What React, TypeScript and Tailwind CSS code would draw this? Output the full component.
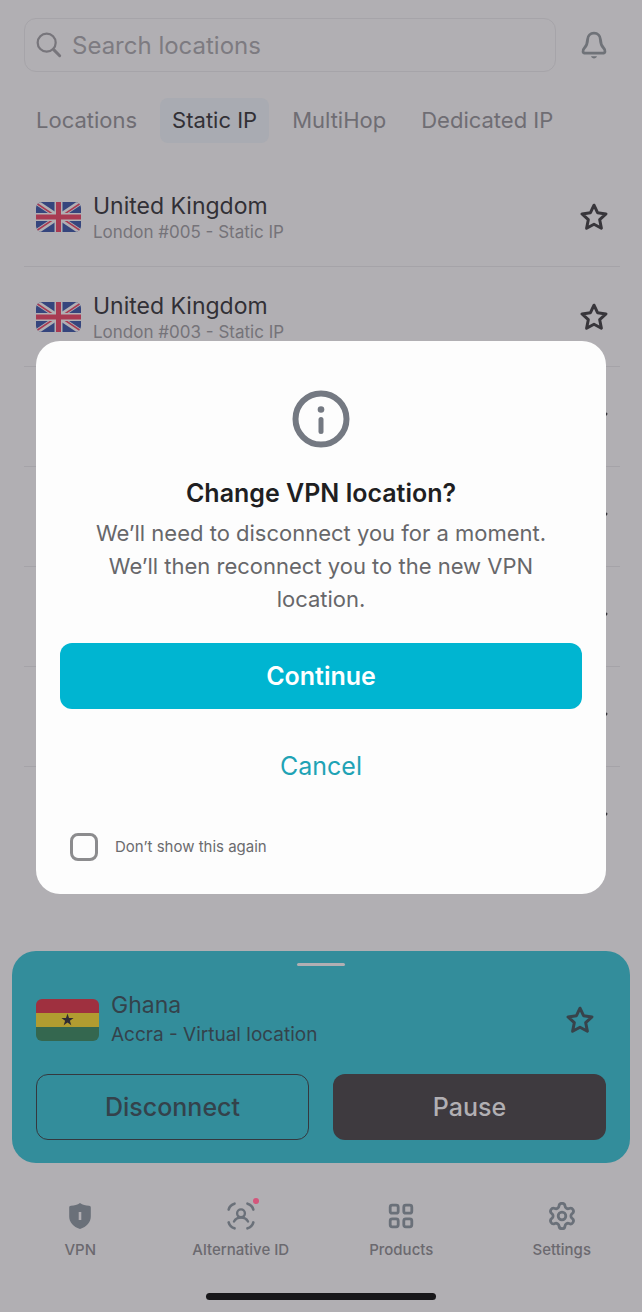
import React, {useState} from 'react';
import {Settings} from 'lucide-react';

interface Location {
    id: number;
    name?: string;
    detail?: string;
}

interface NavItem {
    label: string;
    icon: React.ReactNode;
    badge?: boolean;
}

const tabs = ['Locations', 'Static IP', 'MultiHop', 'Dedicated IP'];

// rows without a name are not loaded yet, only the favourite button is there
const locations: Location[] = [
    {id: 1, name: 'United Kingdom', detail: 'London #005 - Static IP'},
    {id: 2, name: 'United Kingdom', detail: 'London #003 - Static IP'},
    {id: 3},
    {id: 4},
    {id: 5},
    {id: 6},
    {id: 7},
];

const StarIcon = () => (
    <svg viewBox="0 0 28 28" className="w-7 h-7" fill="none" stroke="currentColor" strokeWidth="3" strokeLinejoin="round">
        <path d="M14 2.2 17.53 9.700 25.98 10.900 19.700 16.700 21.400 25.200 14 21.200 6.600 25.200 8.300 16.700 2.020 10.900 10.470 9.700Z"/>
    </svg>
);

const SearchIcon = () => (
    <svg viewBox="0 0 28 28" className="w-[26px] h-[26px] shrink-0" fill="none" stroke="currentColor" strokeLinecap="round">
        <circle cx="11.5" cy="11.5" r="9.7" strokeWidth="2.4"/>
        <path d="M19 19 25.500 25.500" strokeWidth="3.2"/>
    </svg>
);

const BellIcon = () => (
    <svg viewBox="0 0 28 30" className="w-7 h-[30px]" fill="none" stroke="currentColor" strokeWidth="2.8" strokeLinejoin="round">
        <path d="M14 3.200c-3.700 0-6.200 2.500-6.400 6.200-.2 4.600-.6 5.900-3 8.400-1.600 1.700-1.900 2.600-1.600 3.800.3 1.100 1.100 1.600 2.500 1.600h17c1.400 0 2.200-.5 2.500-1.600.3-1.200 0-2.100-1.600-3.800-2.400-2.500-2.800-3.800-3-8.400C20.200 5.700 17.700 3.200 14 3.200Z"/>
        <path d="M11 26.200h6c-.5 1.400-1.600 2.200-3 2.200s-2.500-.8-3-2.200Z" fill="currentColor" stroke="none"/>
    </svg>
);

const InfoIcon = () => (
    <svg viewBox="0 0 58 58" className="w-[58px] h-[58px]" fill="none" stroke="currentColor">
        <circle cx="29" cy="29" r="25.5" strokeWidth="6"/>
        <circle cx="29" cy="19.5" r="3.3" fill="currentColor" stroke="none"/>
        <path d="M29 29.5v12" strokeWidth="5" strokeLinecap="round"/>
    </svg>
);

const ShieldIcon = () => (
    <svg viewBox="0 0 28 28" className="w-7 h-7">
        <path d="M14 1c2.5 1.8 5.7 2.6 9 2.7 1.2 0 1.8.7 1.8 1.8v9c0 5.6-4 10.4-10.8 12.5C7.2 24.9 3.2 20.1 3.2 14.5v-9c0-1.1.6-1.8 1.8-1.8C8.3 3.6 11.5 2.8 14 1Z" fill="#6a7079"/>
        <path d="M14 10v8" stroke="#b1afb3" strokeWidth="2.6"/>
    </svg>
);

const IdentityIcon = () => (
    <svg viewBox="0 0 28 28" className="w-7 h-7" fill="none" stroke="currentColor" strokeWidth="2.7" strokeLinecap="round">
        <path d="M1.7 7.5c.8-3 2.8-5 5.800-5.800M20.500 1.700c3 .8 5 2.800 5.800 5.800M26.300 20.500c-.8 3-2.800 5-5.800 5.800M7.500 26.300c-3-.8-5-2.800-5.800-5.800"/>
        <circle cx="14" cy="11.3" r="3.9" strokeWidth="2.4"/>
        <path d="M7 19.500c1.300-2.400 3.900-4 7-4s5.700 1.600 7 4" strokeWidth="2.4"/>
    </svg>
);

const ProductsIcon = () => (
    <svg viewBox="0 0 28 28" className="w-7 h-7" fill="none" stroke="currentColor" strokeWidth="2.8">
        <rect x="3.2" y="3.2" width="8" height="8" rx="2"/>
        <rect x="16.8" y="3.2" width="8" height="8" rx="2"/>
        <rect x="3.2" y="16.8" width="8" height="8" rx="2"/>
        <rect x="16.8" y="16.8" width="8" height="8" rx="2"/>
    </svg>
);

const UkFlag = () => (
    <svg viewBox="0 0 45 30" className="w-[45px] h-[30px] rounded-md shrink-0">
        <path d="M0 0h45v30H0Z" fill="#35457d"/>
        <path d="M0 0 45 30M45 0 0 30" stroke="#b1afb3" strokeWidth="5"/>
        <path d="M0 1 20 14.4M25 15.6 45 29M45 1 25 14.4M20 15.6 0 29" stroke="#a83a52" strokeWidth="1.7"/>
        <path d="M22.5 0v30M0 15h45" stroke="#b1afb3" strokeWidth="8"/>
        <path d="M22.5 0v30M0 15h45" stroke="#a83a52" strokeWidth="5"/>
    </svg>
);

const GhanaFlag = () => (
    <svg viewBox="0 0 63 42" className="w-[63px] h-[42px] rounded-md shrink-0">
        <path d="M0 0h63v14H0Z" fill="#9f303f"/>
        <path d="M0 14h63v14H0Z" fill="#b19c30"/>
        <path d="M0 28h63v14H0Z" fill="#34674f"/>
        <path d="m31.5 14.5 1.5 4.4h4.6l-3.7 2.8 1.4 4.5-3.8-2.7-3.8 2.7 1.4-4.5-3.7-2.8H30Z" fill="#2f2b33"/>
    </svg>
);

const navItems: NavItem[] = [
    {label: 'VPN', icon: <ShieldIcon/>},
    {label: 'Alternative ID', icon: <IdentityIcon/>, badge: true},
    {label: 'Products', icon: <ProductsIcon/>},
    {label: 'Settings', icon: <Settings viewBox="1 1 22 22" className="w-7 h-7" strokeWidth={2.2}/>},
];

const LocationRow: React.FC<{ location: Location }> = ({ location }) => (
    <li className="flex items-center h-[100px] px-3 border-b border-[#a5a3a8] last:border-b-0">
        {location.name && (
            <>
                <UkFlag/>
                <div className="ml-3 pt-0.5">
                    <h3 className="text-[23px] leading-7 text-[#323036]">{location.name}</h3>
                    <p className="text-[17px] leading-6 text-[#757379]">{location.detail}</p>
                </div>
            </>
        )}
        <button type="button" aria-label="Favourite" className="ml-auto text-[#38363b]">
            <StarIcon/>
        </button>
    </li>
);

const ConnectionPanel = () => (
    <section className="mx-3 px-6 pt-3 pb-[23px] rounded-[24px] bg-[#338d9b]">
        <div className="w-12 h-[3px] mx-auto rounded-full bg-[#b1afb3]"/>
        <div className="flex items-center mt-6">
            <GhanaFlag/>
            <div className="ml-3 text-[#34424b]">
                <h3 className="text-[23px] leading-[30px]">Ghana</h3>
                <p className="text-[19px] leading-[30px]">Accra - Virtual location</p>
            </div>
            <button type="button" aria-label="Favourite" className="ml-auto mr-3 text-[#38434a]">
                <StarIcon/>
            </button>
        </div>
        <div className="grid grid-cols-2 gap-6 mt-6">
            <button type="button" className="h-[66px] pt-0.5 rounded-xl border border-[#35383e] text-[25px] font-medium text-[#34424b]">
                Disconnect
            </button>
            <button type="button" className="h-[66px] pt-0.5 rounded-xl bg-[#3e3a3f] text-[25px] font-medium text-[#b1afb3]">
                Pause
            </button>
        </div>
    </section>
);

const ChangeLocationDialog = () => {
    const [hidden, setHidden] = useState<boolean>(false);

    return (
        <div className="absolute inset-0 flex items-center px-9 pb-[77px]">
            <div role="dialog" aria-labelledby="dialog-title" className="flex flex-col w-full px-6 pt-[49px] pb-[33px] rounded-[24px] bg-[#fdfdfd]">
                <div className="flex justify-center text-[#747982]">
                    <InfoIcon/>
                </div>
                <h2 id="dialog-title" className="mt-[29px] text-[25px] leading-8 font-semibold text-center text-[#1f1f22]">
                    Change VPN location?
                </h2>
                <p className="mt-2 px-6 text-[22px] leading-[33px] text-center text-[#67676a]">
                    We’ll need to disconnect you for a moment. We’ll then reconnect you to the new VPN location.
                </p>
                <button type="button" className="h-[66px] mt-[27px] pt-0.5 rounded-xl bg-[#00b5d1] text-[25px] font-semibold text-white">
                    Continue
                </button>
                <button type="button" className="h-[66px] mt-6 pt-0.5 text-[25px] text-[#1fa3b5]">
                    Cancel
                </button>
                <label className="flex items-center self-start mt-[34px] ml-[10px] text-[15px] text-[#6b6b6e]">
                    <input
                        type="checkbox"
                        checked={hidden}
                        onChange={(e) => setHidden(e.target.checked)}
                        className="appearance-none w-7 h-7 mr-[17px] rounded-lg border-3 border-[#8c8c8e] checked:bg-[#00b5d1]"
                    />
                    Don’t show this again
                </label>
            </div>
        </div>
    );
};

const App: React.FC = () => {
    const [tab, setTab] = useState<string>('Static IP');

    return (
        <div className="relative flex flex-col min-h-screen bg-[#b1afb3] font-['Inter',sans-serif]">
            <header className="flex items-center pt-[18px] pl-6 pr-[34px]">
                <label className="flex items-center flex-1 h-[54px] px-[11px] rounded-xl border border-[#a6a4a9] text-[#77757b]">
                    <SearchIcon/>
                    <input
                        type="text"
                        aria-label="Search locations"
                        placeholder="Search locations"
                        className="flex-1 min-w-0 ml-[10px] pt-0.5 text-[24px] outline-none placeholder:text-[#7d7b81]"
                    />
                </label>
                <button type="button" aria-label="Notifications" className="ml-6 text-[#6f7278]">
                    <BellIcon/>
                </button>
            </header>
            <nav className="flex mt-[26px] pl-6">
                {tabs.map((name) => (
                    <button
                        key={name}
                        type="button"
                        onClick={() => setTab(name)}
                        className={`h-[45px] mr-[11px] px-3 rounded-lg text-[22px] ${name === tab ? 'bg-[#a9abb2] text-[#323036]' : 'text-[#6f6d73]'}`}
                    >
                        {name}
                    </button>
                ))}
            </nav>
            <ul className="flex-1 mt-6 pl-6 pr-[22px]">
                {locations.map((location) => (
                    <LocationRow key={location.id} location={location}/>
                ))}
            </ul>
            <ConnectionPanel/>
            <footer className="pt-[39px] pb-3">
                <nav className="grid grid-cols-4">
                    {navItems.map(({label, icon, badge}) => (
                        <button key={label} type="button" className="flex flex-col items-center text-[#6a7079]">
                            <span className="relative">
                                {icon}
                                {badge && <span className="absolute -top-1 -right-1 w-[6px] h-[6px] rounded-full bg-[#d4567c]"/>}
                            </span>
                            <span className="mt-2 text-[15px] leading-6 font-medium text-[#6b696f]">{label}</span>
                        </button>
                    ))}
                </nav>
                <div className="w-[230px] h-[7px] mx-auto mt-[31px] rounded-full bg-[#18171a]"/>
            </footer>
            <ChangeLocationDialog/>
        </div>
    );
};

export default App;
